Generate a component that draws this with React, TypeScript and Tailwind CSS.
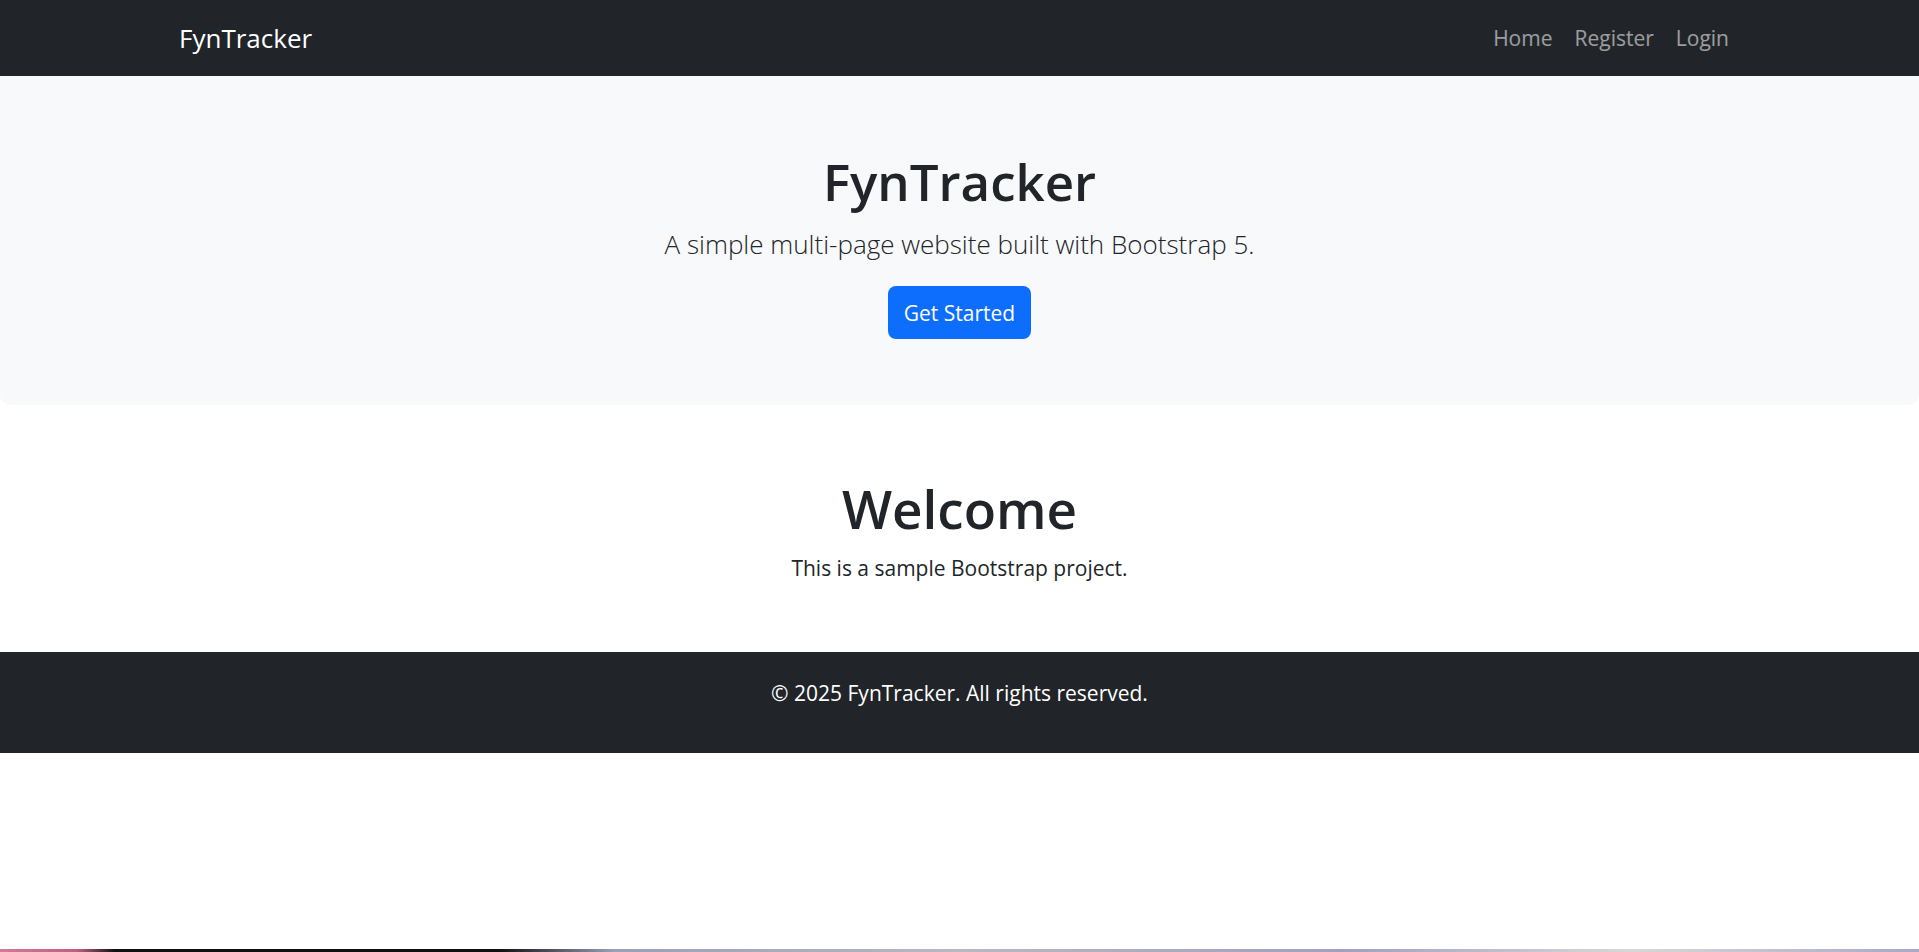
import React from 'react';

const font = { fontFamily: '"Open Sans", "Noto Sans", Arial, sans-serif' };

const links = ['Home', 'Register', 'Login'];

function Navbar() {
  return (
    <nav className="h-[76px] bg-[#212529] flex items-center justify-between pl-[179px] pr-[179px]">
      <a className="text-[26px] leading-[38px] text-white">FynTracker</a>
      <ul className="flex items-center">
        {links.map((l) => (
          <li key={l}>
            <a className="px-[11px] text-[21px] leading-[30px] text-white/55">{l}</a>
          </li>
        ))}
      </ul>
    </nav>
  );
}

function Hero() {
  return (
    <header className="bg-[#f8f9fa] rounded-b-[10px] pt-[75px] pb-[66px] flex flex-col items-center text-center text-[#212529]">
      <h1 className="text-[51px] leading-[60px] font-semibold">FynTracker</h1>
      <p className="mt-[14px] text-[26px] leading-[38px] font-light">A simple multi-page website built with Bootstrap 5.</p>
      <button className="mt-[23px] h-[53px] px-[16px] rounded-[8px] bg-[#0d6efd] text-white text-[21px] leading-[30px]">
        Get Started
      </button>
    </header>
  );
}

function Welcome() {
  return (
    <section className="pt-[71px] pb-[69px] flex flex-col items-center text-center text-[#212529]">
      <h2 className="text-[53px] leading-[66px] font-semibold">Welcome</h2>
      <p className="mt-[11px] text-[21px] leading-[30px]">This is a sample Bootstrap project.</p>
    </section>
  );
}

function Footer() {
  return (
    <footer className="bg-[#212529] pt-[26px] pb-[45px] text-center text-white">
      <p className="text-[21px] leading-[30px]">© 2025 FynTracker. All rights reserved.</p>
    </footer>
  );
}

export default function App() {
  return (
    <div className="min-h-screen flex flex-col bg-white" style={font}>
      <Navbar />
      <Hero />
      <Welcome />
      <Footer />
      <div className="flex-1" />
      {/* thin desktop strip visible at bottom edge */}
      <div className="h-[3px] bg-[linear-gradient(90deg,#d27a97_0%,#c06080_4%,#111_6%,#111_26%,#9aa0b8_32%,#b8b8c0_50%,#a0a0c0_70%,#d8d8d8_85%,#a8a8c8_100%)]" />
    </div>
  );
}
